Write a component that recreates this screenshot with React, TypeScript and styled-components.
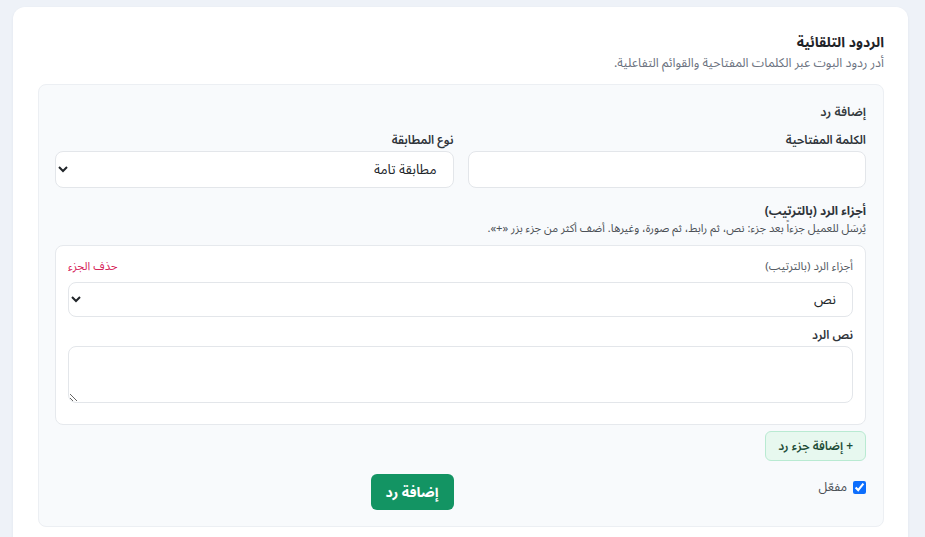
import React from "react";
import styled, { createGlobalStyle } from "styled-components";

const Global = createGlobalStyle`
  html, body { margin: 0; padding: 0; background: #eef2f8; }
  body { font-family: "Noto Sans Arabic", "Noto Sans", "DejaVu Sans", sans-serif; color: #212529; }
  * { box-sizing: border-box; }
`;

const Page = styled.div`
  direction: rtl;
  padding: 7px 17px 0 13px;
  height: 537px;
  overflow: hidden;
`;

const Card = styled.section`
  background: #ffffff;
  border-radius: 12px;
  box-shadow: 0 1px 3px rgba(20, 30, 60, 0.06);
  padding: 25px 24px 24px 25px;
  min-height: 560px;
`;

const Title = styled.h2`
  margin: 0;
  font-size: 14px;
  font-weight: 700;
  line-height: 22px;
  color: #1f2328;
`;

const Subtitle = styled.p`
  margin: 0 0 12px;
  font-size: 12.5px;
  line-height: 18px;
  color: #6b7280;
`;

const Panel = styled.div`
  background: #f8fafc;
  border: 1px solid #eceff3;
  border-radius: 8px;
  padding: 17px 17px 16px 16px;
`;

const PanelTitle = styled.div`
  font-size: 12.5px;
  font-weight: 600;
  line-height: 20px;
  color: #343a40;
  margin-bottom: 9px;
`;

const Grid = styled.div`
  display: grid;
  grid-template-columns: minmax(0, 1fr) minmax(0, 1fr);
  column-gap: 14px;
`;

const Field = styled.div`
  display: flex;
  flex-direction: column;
  min-width: 0;
`;

const Label = styled.label<{ $small?: boolean; $gap?: number }>`
  font-size: ${(p) => (p.$small ? "11.5px" : "12px")};
  font-weight: ${(p) => (p.$small ? 400 : 600)};
  line-height: 20px;
  color: ${(p) => (p.$small ? "#555b63" : "#2f343a")};
  margin-top: ${(p) => p.$gap ?? 0}px;
`;

const Input = styled.input`
  width: 100%;
  height: 37px;
  border: 1px solid #e3e6ea;
  border-radius: 8px;
  background: #fff;
  font: inherit;
  padding: 0 12px;
`;

const Select = styled.select<{ $h?: number }>`
  width: 100%;
  height: ${(p) => p.$h ?? 37}px;
  border: 1px solid #e3e6ea;
  border-radius: 8px;
  background: #fff;
  font-family: inherit;
  font-size: 13.5px;
  color: #212529;
  padding: 0 12px 0 8px;
`;

const SectionHead = styled.div`
  margin-top: 15px;
  display: flex;
  flex-direction: column;
`;

const SectionTitle = styled.div`
  font-size: 12px;
  font-weight: 700;
  line-height: 18px;
  color: #2f343a;
`;

const Hint = styled.div`
  font-size: 11.2px;
  line-height: 16px;
  color: #4b5056;
  margin-bottom: 8px;
`;

const PartCard = styled.div`
  background: #fff;
  border: 1px solid #e6e9ed;
  border-radius: 8px;
  padding: 10px 12px 21px 12px;
  display: flex;
  flex-direction: column;
`;

const PartHead = styled.div`
  display: flex;
  justify-content: space-between;
  align-items: center;
  margin-bottom: 6px;
`;

const DeleteLink = styled.button`
  border: 0;
  background: none;
  padding: 0;
  font-family: inherit;
  font-size: 11.5px;
  color: #d6245a;
  line-height: 20px;
  cursor: pointer;
`;

const TextArea = styled.textarea`
  display: block;
  width: 100%;
  height: 57px;
  border: 1px solid #e3e6ea;
  border-radius: 8px;
  background: #fff;
  font: inherit;
  resize: vertical;
`;

const AddPartRow = styled.div`
  display: flex;
  justify-content: flex-start;
  margin-top: 6px;
`;

const AddPartButton = styled.button`
  height: 30px;
  padding: 0 12px;
  border: 1px solid #b9ead2;
  border-radius: 6px;
  background: #e7f8ef;
  color: #1f4d38;
  font-family: inherit;
  font-size: 12px;
  font-weight: 600;
`;

const BottomRow = styled.div`
  display: grid;
  grid-template-columns: minmax(0, 1fr) minmax(0, 1fr);
  column-gap: 14px;
  margin-top: 13px;
`;

const CheckLabel = styled.label`
  display: flex;
  align-items: center;
  gap: 6px;
  font-size: 12.5px;
  color: #4b5056;
  padding-top: 0;
  align-self: start;
`;

const Check = styled.input`
  width: 13px;
  height: 13px;
  margin: 0;
  accent-color: #0d6efd;
`;

const PrimaryButton = styled.button`
  justify-self: start;
  height: 36px;
  padding: 0 15px;
  border: 0;
  border-radius: 6px;
  background: #139463;
  color: #fff;
  font-family: inherit;
  font-size: 14px;
  font-weight: 700;
`;

export default function App() {
  return (
    <>
      <Global />
      <Page>
        <Card>
          <Title>الردود التلقائية</Title>
          <Subtitle>أدر ردود البوت عبر الكلمات المفتاحية والقوائم التفاعلية.</Subtitle>
          <Panel>
            <PanelTitle>إضافة رد</PanelTitle>
            <Grid>
              <Field>
                <Label>الكلمة المفتاحية</Label>
                <Input />
              </Field>
              <Field>
                <Label>نوع المطابقة</Label>
                <Select defaultValue="exact">
                  <option value="exact">مطابقة تامة</option>
                  <option value="contains">يحتوي</option>
                </Select>
              </Field>
            </Grid>
            <SectionHead>
              <SectionTitle>أجزاء الرد (بالترتيب)</SectionTitle>
              <Hint>يُرسَل للعميل جزءاً بعد جزء: نص، ثم رابط، ثم صورة، وغيرها. أضف أكثر من جزء بزر «+».</Hint>
            </SectionHead>
            <PartCard>
              <PartHead>
                <Label $small>أجزاء الرد (بالترتيب)</Label>
                <DeleteLink>حذف الجزء</DeleteLink>
              </PartHead>
              <Select $h={35} defaultValue="text">
                <option value="text">نص</option>
                <option value="link">رابط</option>
                <option value="image">صورة</option>
              </Select>
              <Label $gap={9}>نص الرد</Label>
              <TextArea />
            </PartCard>
            <AddPartRow>
              <AddPartButton>+ إضافة جزء رد</AddPartButton>
            </AddPartRow>
            <BottomRow>
              <CheckLabel>
                <Check type="checkbox" defaultChecked />
                مفعّل
              </CheckLabel>
              <PrimaryButton>إضافة رد</PrimaryButton>
            </BottomRow>
          </Panel>
        </Card>
      </Page>
    </>
  );
}
